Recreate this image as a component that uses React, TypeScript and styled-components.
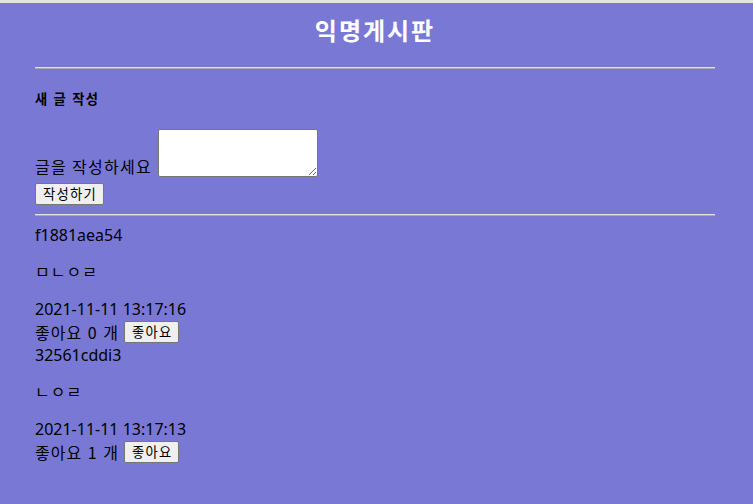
import React from "react";
import styled, { createGlobalStyle } from "styled-components";

const Global = createGlobalStyle`
  html, body { margin: 0; padding: 0; }
  body {
    background: #7979d5;
    font-family: "Noto Sans", "Noto Sans CJK KR", sans-serif;
    color: #000;
  }
`;

const Page = styled.div`
  min-height: 501px;
  border-top: 3px solid #e4e4e4;
  background: #7979d5;
  padding: 1px 38px 0 35px;
`;

const Title = styled.h2`
  margin: 10px 0 0;
  height: 32px;
  line-height: 32px;
  font-size: 24px;
  font-weight: 700;
  letter-spacing: 2px;
  color: #fff;
  text-align: center;
  font-family: "Noto Sans CJK KR", sans-serif;
`;

const Rule = styled.hr<{ $top: number }>`
  margin: ${(p) => p.$top}px 0 8px;
  height: 0;
  border: 0;
  border-top: 1px solid #e2e2e2;
  border-bottom: 1px solid #a9a9a9;
`;

const SectionTitle = styled.h5`
  margin: 22px 0;
  font-size: 13.28px;
  line-height: 16px;
  font-weight: 700;
  letter-spacing: 1.2px;
  word-spacing: 1px;
  font-family: "Noto Sans CJK KR", sans-serif;
`;

const Form = styled.form`
  margin: 0;
`;

const Label = styled.label`
  font-size: 16px;
  font-family: "Noto Sans CJK KR", sans-serif;
  letter-spacing: 1.3px;
  line-height: 22px;
`;

const Area = styled.textarea`
  box-sizing: border-box;
  width: 160px;
  height: 48px;
  margin: 0 0 0 6px;
  vertical-align: -4px;
  border: 1px solid #767676;
  border-radius: 2px;
  background: #fff;
`;

const Button = styled.button`
  font-family: "Noto Sans CJK KR", sans-serif;
  font-size: 13.33px;
  letter-spacing: 1.2px;
  line-height: 16px;
  height: 22px;
  padding: 1px 6px 1px 7px;
  background: #efefef;
  border: 1px solid #767676;
  border-radius: 2px;
  color: #000;
  box-sizing: border-box;
`;

const SubmitRow = styled.div`
  margin-top: 5px;
  display: flex;
`;

const Post = styled.div`
  font-size: 16px;
  line-height: 22px;
`;

const Id = styled.div``;

const Content = styled.p`
  margin: 14px 0 16px;
  letter-spacing: 1px;
  font-family: "Noto Sans CJK KR", sans-serif;
`;

const Date = styled.div``;

const LikeRow = styled.div`
  display: flex;
  align-items: center;
  gap: 5px;
  height: 24px;
  letter-spacing: 1px;
  word-spacing: 1px;
  font-family: "Noto Sans CJK KR", sans-serif;
`;

const posts = [
  { id: "f1881aea54", content: "ㅁㄴㅇㄹ", date: "2021-11-11 13:17:16", likes: 0 },
  { id: "32561cddi3", content: "ㄴㅇㄹ", date: "2021-11-11 13:17:13", likes: 1 },
];

export default function App() {
  return (
    <>
      <Global />
      <Page>
        <Title>익명게시판</Title>
        <Rule $top={21} />
        <SectionTitle>새 글 작성</SectionTitle>
        <Form onSubmit={(e) => e.preventDefault()}>
          <Label>
            글을 작성하세요
            <Area />
          </Label>
          <SubmitRow>
            <Button type="submit">작성하기</Button>
          </SubmitRow>
        </Form>
        <Rule $top={9} />
        {posts.map((p) => (
          <Post key={p.id}>
            <Id>{p.id}</Id>
            <Content>{p.content}</Content>
            <Date>{p.date}</Date>
            <LikeRow>
              좋아요 {p.likes} 개<Button type="button">좋아요</Button>
            </LikeRow>
          </Post>
        ))}
      </Page>
    </>
  );
}
